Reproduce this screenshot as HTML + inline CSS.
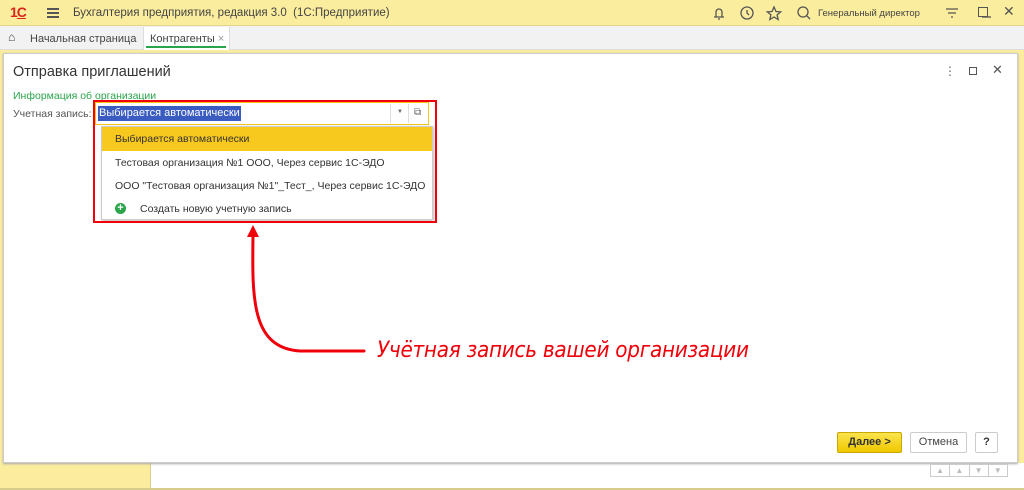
<!DOCTYPE html>
<html><head><meta charset="utf-8"><style>
*{margin:0;padding:0;box-sizing:border-box}
body{width:1024px;height:490px;position:relative;overflow:hidden;background:#fbec9e;font-family:"Liberation Sans",sans-serif;font-size:11px;color:#333}
.abs{position:absolute}
</style></head><body>
<div class="abs" style="left:0;top:0;width:1024px;height:26px;background:#fbed9e;border-bottom:1px solid #e3d48a"></div>
<div class="abs" style="left:10px;top:4px;color:#d9261c;font-weight:bold;font-size:14px;letter-spacing:-1px">1<span style="text-decoration:underline">С</span></div>
<div class="abs" style="left:47px;top:8px;width:12px;height:2px;background:#555;box-shadow:0 4px 0 #555,0 8px 0 #555"></div>
<div class="abs" style="left:73px;top:7px;font-size:11.5px;color:#444">Бухгалтерия предприятия, редакция 3.0&nbsp; (1С:Предприятие)</div>
<svg class="abs" style="left:710px;top:5px" width="300" height="16" fill="none" stroke="#555" stroke-width="1.3">
<path d="M4 12h10M6 12V7a3 3 0 0 1 6 0v5M8 14h2"/>
<circle cx="37" cy="8" r="6"/><path d="M37 5v3l2 2"/>
<path d="M64 2l2 4.5 4.7.4-3.6 3 1.1 4.6L64 12l-4.2 2.5 1.1-4.6-3.6-3 4.7-.4z"/>
<circle cx="93" cy="7" r="5"/><path d="M97 11l3 3"/>
<path d="M236 4h12M238 8h8M241 12h2"/><path d="M272 12h9"/>
</svg>
<div class="abs" style="left:818px;top:8px;font-size:9.5px;color:#444">Генеральный директор</div>
<div class="abs" style="left:978px;top:7px;width:10px;height:10px;border:1.3px solid #555"></div>
<div class="abs" style="left:1003px;top:3px;font-size:14px;color:#555">✕</div>
<div class="abs" style="left:0;top:26px;width:1024px;height:24px;background:#f2f2f2;border-bottom:1px solid #ddd"></div>
<div class="abs" style="left:8px;top:30px;font-size:12px;color:#444">⌂</div>
<div class="abs" style="left:30px;top:33px;font-size:11px;color:#444">Начальная страница</div>
<div class="abs" style="left:143px;top:27px;width:87px;height:23px;background:#fff;border-left:1px solid #ddd;border-right:1px solid #ddd"></div>
<div class="abs" style="left:150px;top:33px;color:#444">Контрагенты <span style="color:#999">×</span></div>
<div class="abs" style="left:146px;top:46px;width:80px;height:2px;background:#2aa54a"></div>
<div class="abs" style="left:150px;top:463px;width:874px;height:25px;background:#fff;border-left:1px solid #d8cc8a"></div>
<div class="abs" style="left:0;top:488px;width:1024px;height:2px;background:#d8cc8a"></div>
<div class="abs" style="left:3px;top:53px;width:1015px;height:410px;background:#fff;border:1px solid #ccc;box-shadow:0 1px 2px #aaa"></div>
<div class="abs" style="left:13px;top:64px;font-size:14.5px;color:#333">Отправка приглашений</div>
<div class="abs" style="left:944px;top:64px;font-size:12px;color:#666">⋮</div>
<div class="abs" style="left:969px;top:67px;width:8px;height:8px;border:1.2px solid #555"></div>
<div class="abs" style="left:992px;top:62px;font-size:13px;color:#555">✕</div>
<div class="abs" style="left:13px;top:90px;color:#2aa54a;font-size:10.5px">Информация об организации</div>
<div class="abs" style="left:13px;top:108px;color:#555;font-size:10.5px">Учетная запись:</div>
<div class="abs" style="left:95px;top:102px;width:334px;height:23px;border:1px solid #f5c518;background:#fff"></div>
<div class="abs" style="left:98px;top:106px;background:#3a5bbf;color:#fff;padding:0 1px;font-size:11px;line-height:15px">Выбирается автоматически</div>
<div class="abs" style="left:390px;top:104px;width:1px;height:19px;background:#ddd"></div>
<div class="abs" style="left:408px;top:104px;width:1px;height:19px;background:#ddd"></div>
<div class="abs" style="left:397px;top:109px;font-size:6px;color:#666">▼</div>
<div class="abs" style="left:414px;top:107px;font-size:10px;color:#666">⧉</div>
<div class="abs" style="left:101px;top:126px;width:332px;height:94px;background:#fff;border:1px solid #ccc;box-shadow:1px 1px 3px #bbb"></div>
<div class="abs" style="left:102px;top:127px;width:330px;height:24px;background:#f7c81e"></div>
<div class="abs" style="left:115px;top:133px;font-size:10.5px;color:#333">Выбирается автоматически</div>
<div class="abs" style="left:115px;top:157px;font-size:10.5px;color:#333">Тестовая организация №1 ООО, Через сервис 1С-ЭДО</div>
<div class="abs" style="left:115px;top:180px;font-size:10.5px;color:#333">ООО "Тестовая организация №1"_Тест_, Через сервис 1С-ЭДО</div>
<div class="abs" style="left:115px;top:203px;width:11px;height:11px;border-radius:50%;background:#2aa54a;color:#fff;font-size:11px;line-height:11px;text-align:center;font-weight:bold">+</div>
<div class="abs" style="left:140px;top:203px;font-size:10.5px;color:#333">Создать новую учетную запись</div>
<div class="abs" style="left:93px;top:100px;width:344px;height:123px;border:2px solid #f0000a"></div>
<svg class="abs" style="left:0;top:0" width="1024" height="490"><path d="M253 236 C252 300 252 348 300 351 L364 351" fill="none" stroke="#f0000a" stroke-width="3" stroke-linecap="round"/><path d="M247 237 L253 225 L259 237Z" fill="#f0000a"/></svg>
<div class="abs" style="left:377px;top:338px;font-size:22px;font-style:italic;color:#f0000a;font-family:'DejaVu Sans',sans-serif;letter-spacing:-0.3px;transform:scaleX(.91);transform-origin:left">Учётная запись вашей организации</div>
<div class="abs" style="left:837px;top:432px;width:65px;height:21px;background:linear-gradient(#fae34d,#f0c800);border:1px solid #c9a800;border-radius:2px;text-align:center;line-height:19px;font-weight:bold;color:#333">Далее &gt;</div>
<div class="abs" style="left:910px;top:432px;width:57px;height:21px;background:#fff;border:1px solid #ccc;border-radius:2px;text-align:center;line-height:19px;color:#444">Отмена</div>
<div class="abs" style="left:975px;top:432px;width:23px;height:21px;background:#fff;border:1px solid #ccc;border-radius:2px;text-align:center;line-height:19px;color:#333;font-weight:bold">?</div>
<div class="abs" style="left:930px;top:464px;width:78px;height:13px;border:1px solid #ccc;background:#fff;display:flex;font-size:8px;line-height:11px;color:#bbb">
<span style="flex:1;text-align:center;border-right:1px solid #ccc">▲</span><span style="flex:1;text-align:center;border-right:1px solid #ccc">▲</span><span style="flex:1;text-align:center;border-right:1px solid #ccc">▼</span><span style="flex:1;text-align:center">▼</span></div>
</body></html>
